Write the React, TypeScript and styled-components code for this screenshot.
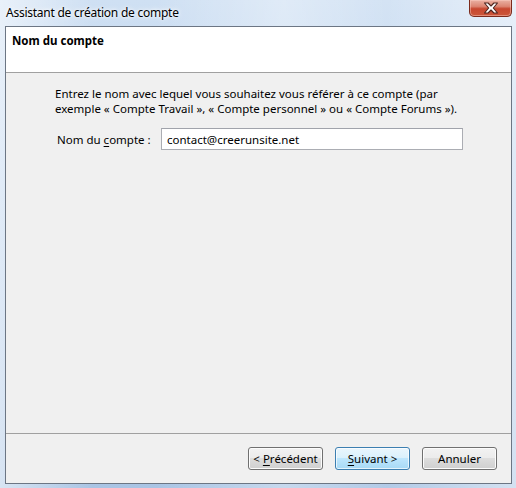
import React from 'react'
import styled, {createGlobalStyle} from 'styled-components'

const GlobalStyle = createGlobalStyle`
  html, body {
    margin: 0;
    padding: 0;
  }
  body {
    font-family: 'Noto Sans', 'Open Sans', sans-serif;
    font-size: 11.5px;
    color: #000;
  }
`

const Frame = styled.div`
  width: 516px;
  height: 488px;
  box-sizing: border-box;
  display: flex;
  flex-direction: column;
  background:
    linear-gradient(90deg, rgba(255, 255, 255, 0.55) 0%, rgba(255, 255, 255, 0) 18%, rgba(255, 255, 255, 0) 30%, rgba(255, 255, 255, 0.35) 55%, rgba(255, 255, 255, 0.1) 75%, rgba(255, 255, 255, 0.5) 100%),
    linear-gradient(180deg, #cfe0f3 0%, #bcd3ee 40%, #a9c4e4 100%);
`

const TitleBar = styled.div`
  height: 26px;
  flex: none;
  display: flex;
  align-items: flex-start;
  padding-left: 6px;
`

const Title = styled.span`
  margin-top: 5px;
  line-height: 16px;
  font-size: 12px;
  letter-spacing: -0.25px;
  text-shadow: 0 0 6px #fff, 0 0 3px #fff;
`

const CloseButton = styled.div`
  margin-left: auto;
  margin-right: 4px;
  width: 43px;
  height: 17px;
  box-sizing: border-box;
  border: 1px solid #7b2a1c;
  border-top: none;
  border-radius: 0 0 5px 5px;
  background: linear-gradient(180deg, #eab1a3 0%, #dc8572 40%, #c7472f 55%, #cc573a 100%);
  box-shadow: inset 0 0 0 1px rgba(255, 210, 200, 0.45);
  display: flex;
  align-items: center;
  justify-content: center;
`

const Client = styled.div`
  flex: 1;
  margin: 0 4px 4px 5px;
  border: 1px solid #6c7684;
  background: #f0f0f0;
  display: flex;
  flex-direction: column;
`

const Header = styled.div`
  height: 46px;
  flex: none;
  box-sizing: border-box;
  padding: 6px 6px 0;
  background: #fff;
  border-bottom: 1px solid #a0a0a0;
`

const HeaderTitle = styled.div`
  font-weight: bold;
  line-height: 16px;
`

const Body = styled.div`
  flex: 1;
  padding: 13px 20px 0 49px;
`

const Intro = styled.p`
  margin: 0;
  line-height: 15px;
  white-space: nowrap;
`

const FieldRow = styled.div`
  display: flex;
  align-items: center;
  margin-top: 12px;
  padding-left: 2px;
`

const Label = styled.label`
  width: 104px;
  flex: none;
`

const TextBox = styled.div`
  width: 302px;
  height: 22px;
  box-sizing: border-box;
  border: 1px solid #abadb3;
  border-top-color: #a0a3ab;
  background: #fff;
  padding-left: 5px;
  display: flex;
  align-items: center;
`

const Footer = styled.div`
  height: 50px;
  flex: none;
  box-sizing: border-box;
  border-top: 1px solid #a0a0a0;
  display: flex;
  justify-content: flex-end;
  align-items: center;
  gap: 12px;
  padding-right: 14px;
`

const Button = styled.div<{$default?: boolean}>`
  width: 75px;
  height: 23px;
  box-sizing: border-box;
  border-radius: 3px;
  border: 1px solid ${(p) => (p.$default ? '#3c7fb1' : '#707070')};
  background: ${(p) =>
    p.$default
      ? 'linear-gradient(180deg, #eaf6fd 0%, #d9f0fc 50%, #bee6fd 50%, #a7d9f5 100%)'
      : 'linear-gradient(180deg, #f2f2f2 0%, #ebebeb 50%, #dddddd 50%, #cfcfcf 100%)'};
  box-shadow: inset 0 0 0 1px ${(p) => (p.$default ? 'rgba(255,255,255,0.7)' : '#fcfcfc')};
  display: flex;
  align-items: center;
  justify-content: center;
  line-height: 15px;
  white-space: pre;
`

const Key = styled.span`
  text-decoration: underline;
  text-underline-offset: 2px;
`

// white "x" with a dark rim, as on the Aero close button
const CloseGlyph = () => (
  <svg width="16" height="12" viewBox="0 0 16 12">
    <path
      d="M1.5 1h3.6l2.9 3 2.9-3h3.6L10.3 6l4.2 5h-3.6L8 8 5.1 11H1.5l4.2-5z"
      fill="#fff"
      stroke="#4e2620"
      strokeWidth="1.1"
      strokeLinejoin="round"
    />
  </svg>
)

const App = () => (
  <>
    <GlobalStyle />
    <Frame>
      <TitleBar>
        <Title>Assistant de création de compte</Title>
        <CloseButton>
          <CloseGlyph />
        </CloseButton>
      </TitleBar>
      <Client>
        <Header>
          <HeaderTitle>Nom du compte</HeaderTitle>
        </Header>
        <Body>
          <Intro>
            Entrez le nom avec lequel vous souhaitez vous référer à ce compte (par
            <br />
            exemple « Compte Travail », « Compte personnel » ou « Compte Forums »).
          </Intro>
          <FieldRow>
            <Label>
              Nom du <Key>c</Key>ompte :
            </Label>
            <TextBox>contact@creerunsite.net</TextBox>
          </FieldRow>
        </Body>
        <Footer>
          <Button>
            {'< '}
            <Key>P</Key>récédent
          </Button>
          <Button $default>
            <Key>S</Key>
            {'uivant >'}
          </Button>
          <Button>Annuler</Button>
        </Footer>
      </Client>
    </Frame>
  </>
)

export default App
